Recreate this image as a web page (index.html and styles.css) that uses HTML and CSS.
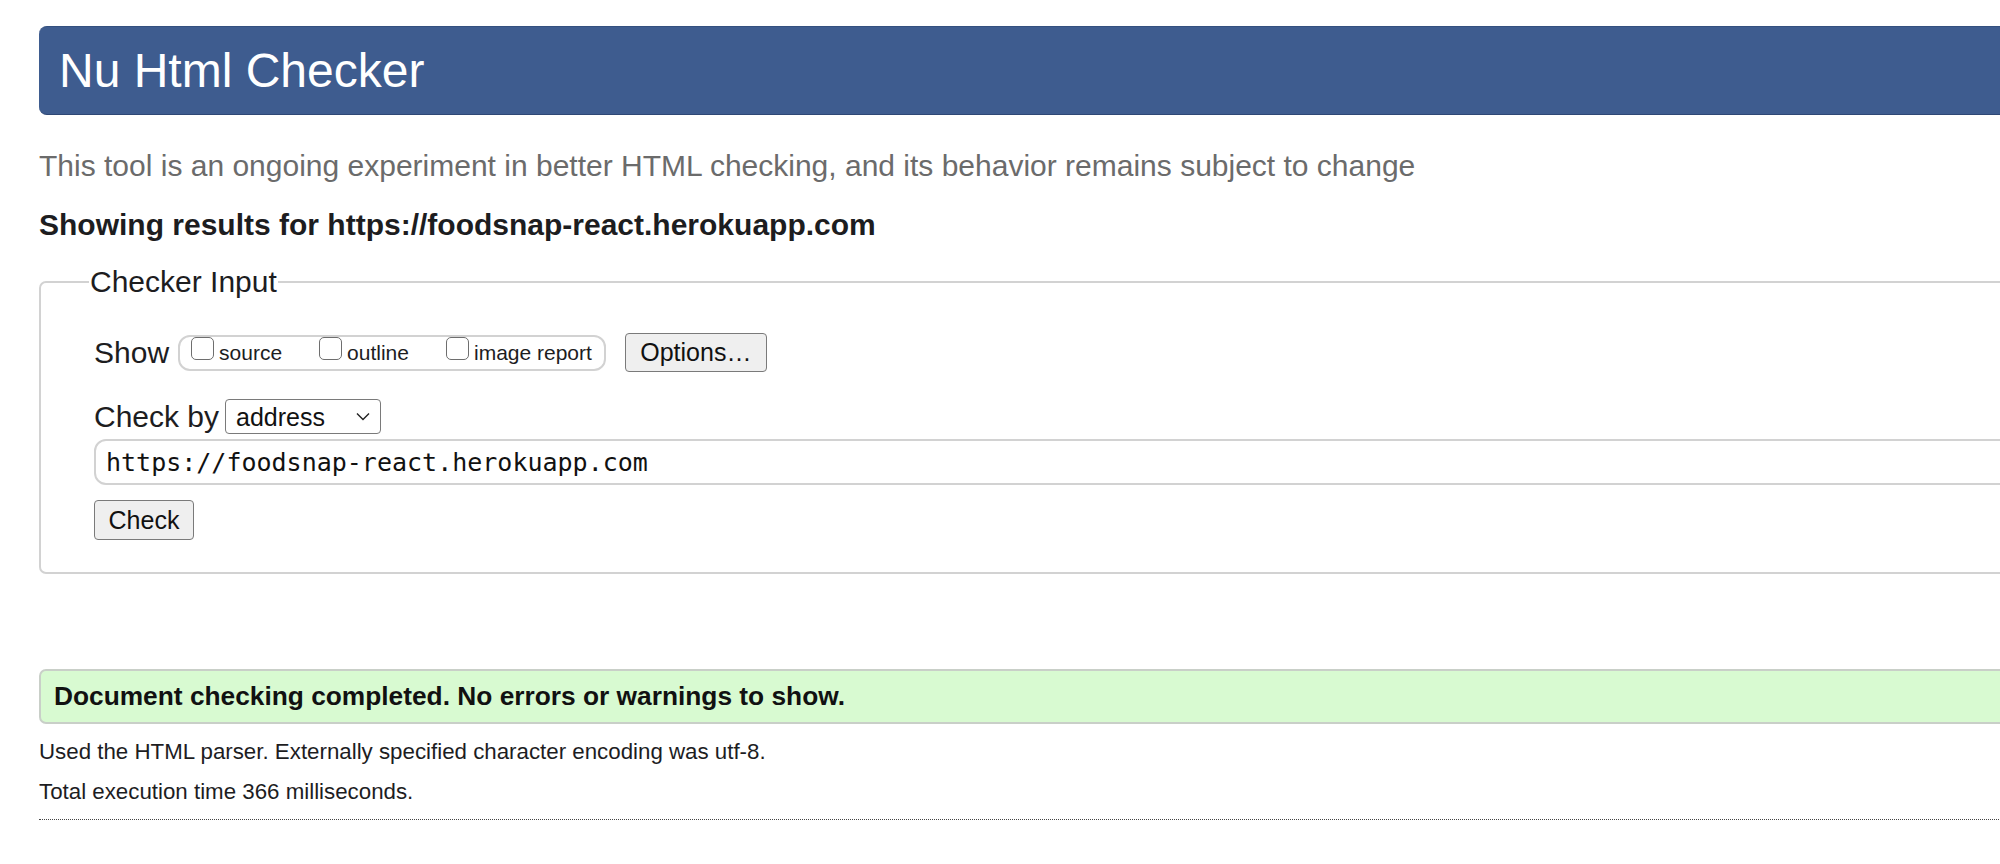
FILE: index.html
```html
<!DOCTYPE html>
<html lang="en">
<head>
<meta charset="utf-8">
<title>Nu Html Checker</title>
<link rel="stylesheet" href="styles.css">
</head>
<body>
<div class="page">
  <h1 class="banner">Nu Html Checker</h1>
  <p class="tagline">This tool is an ongoing experiment in better HTML checking, and its behavior remains subject to change</p>
  <p class="showing">Showing results for https://foodsnap-react.herokuapp.com</p>

  <fieldset class="checker">
    <legend class="checker-legend">Checker Input</legend>
    <div class="row show-row">
      <span class="row-label">Show</span>
      <div class="opts-group">
        <label class="opt"><input type="checkbox" class="box"><span>source</span></label>
        <label class="opt"><input type="checkbox" class="box"><span>outline</span></label>
        <label class="opt"><input type="checkbox" class="box"><span>image report</span></label>
      </div>
      <button class="btn options-btn" type="button">Options…</button>
    </div>
    <div class="row by-row">
      <span class="row-label">Check by</span>
      <span class="select-wrap">
        <select class="select"><option>address</option></select>
        <svg class="chev" width="14" height="9" viewBox="0 0 14 9"><path d="M1 1.5 L7 7.5 L13 1.5" fill="none" stroke="#222" stroke-width="1.4"/></svg>
      </span>
    </div>
    <input class="url" type="text" value="https://foodsnap-react.herokuapp.com">
    <button class="btn check-btn" type="button">Check</button>
  </fieldset>

  <div class="success">Document checking completed. No errors or warnings to show.</div>
  <p class="details first">Used the HTML parser. Externally specified character encoding was utf-8.</p>
  <p class="details">Total execution time 366 milliseconds.</p>
  <hr class="dots">
</div>
</body>
</html>
```

FILE: styles.css
```css
html, body {
  margin: 0;
  padding: 0;
  background: #fff;
}
body {
  overflow: hidden;
  font-family: "Liberation Sans", Arial, sans-serif;
  color: #1d1d1f;
}
.page {
  width: 2100px;
  padding: 26px 0 0 39px;
}
.banner {
  margin: 0;
  height: 87px;
  line-height: 87px;
  background: #3e5c8f;
  border-top: 1px solid #34507f;
  border-bottom: 1px solid #2e4775;
  border-radius: 8px;
  color: #fff;
  font-size: 48px;
  font-weight: normal;
  padding-left: 20px;
}
.tagline {
  margin: 33px 0 0;
  font-size: 30px;
  line-height: 35px;
  color: #6b6b6b;
}
.showing {
  margin: 24px 0 0;
  font-size: 30px;
  line-height: 35px;
  font-weight: bold;
  color: #1d1d1f;
}
.checker {
  margin: 21px 0 0;
  padding: 32px 0 32px 53px;
  border: 2px solid #d2d2d2;
  border-radius: 7px;
  min-width: 0;
}
.checker-legend {
  margin-left: -5px;
  padding: 0 1px;
  font-size: 30px;
  line-height: 38px;
  color: #1d1d1f;
}
.row {
  display: flex;
  align-items: center;
}
.show-row {
  height: 39px;
}
.row-label {
  font-size: 30px;
  line-height: 35px;
}
.opts-group {
  display: flex;
  align-items: center;
  margin-left: 9px;
  height: 32px;
  padding: 0 12px 0 11px;
  border: 2px solid #d2d2d2;
  border-radius: 12px;
  gap: 37px;
}
.opt {
  display: flex;
  align-items: baseline;
  font-size: 21px;
  line-height: 32px;
  color: #1d1d1f;
}
.box {
  -webkit-appearance: none;
  appearance: none;
  width: 23px;
  height: 23px;
  margin: 0 5px 3px 0;
  border: 1.5px solid #6e6e6e;
  border-radius: 5px;
  background: #fff;
}
.btn {
  font-family: "Liberation Sans", Arial, sans-serif;
  font-size: 25px;
  color: #111;
  background: #efefef;
  border: 1.5px solid #7a7a7a;
  border-radius: 4px;
  padding: 0;
}
.options-btn {
  margin-left: 19px;
  width: 142px;
  height: 39px;
}
.by-row {
  margin-top: 27px;
  height: 35px;
}
.select-wrap {
  position: relative;
  display: inline-block;
  margin-left: 6px;
}
.select {
  -webkit-appearance: none;
  appearance: none;
  display: block;
  width: 156px;
  height: 35px;
  padding: 0 0 0 10px;
  font-family: "Liberation Sans", Arial, sans-serif;
  font-size: 25px;
  color: #111;
  background: #fff;
  border: 1.5px solid #7a7a7a;
  border-radius: 4px;
}
.chev {
  position: absolute;
  right: 11px;
  top: 13px;
}
.url {
  display: block;
  box-sizing: border-box;
  margin-top: 5px;
  width: 2100px;
  height: 46px;
  padding: 0 0 0 10px;
  font-family: "DejaVu Sans Mono", monospace;
  font-size: 25px;
  color: #111;
  border: 2px solid #d2d2d2;
  border-radius: 12px;
  background: #fff;
}
.check-btn {
  display: block;
  margin-top: 15px;
  width: 100px;
  height: 40px;
}
.success {
  margin-top: 95px;
  height: 51px;
  line-height: 51px;
  padding-left: 13px;
  background: #d8fad1;
  border: 2px solid #c9cfc8;
  border-radius: 7px;
  font-size: 26.3px;
  font-weight: bold;
  color: #111;
}
.details {
  margin: 14px 0 0;
  font-size: 22.3px;
  line-height: 26px;
  color: #1d1d1f;
}
.details.first {
  margin-top: 15px;
}
.dots {
  margin: 14px 0 0;
  height: 0;
  border: 0;
  border-top: 1px dotted #444;
}
```
